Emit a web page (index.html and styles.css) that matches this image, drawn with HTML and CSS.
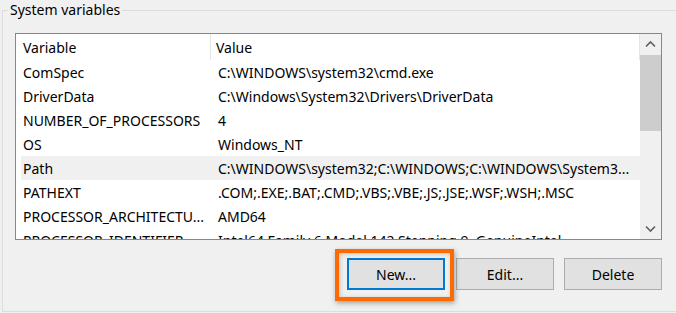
FILE: index.html
```html
<!DOCTYPE html>
<html lang="en">
<head>
<meta charset="utf-8">
<title>System variables</title>
<link rel="stylesheet" href="styles.css">
</head>
<body>
<fieldset class="group">
  <legend class="group-title">System variables</legend>
  <div class="inner">
    <div class="listbox">
      <div class="list">
        <div class="row head">
          <div class="cell">Variable</div>
          <div class="cell sep">Value</div>
        </div>
        <div class="row"><div class="cell">ComSpec</div><div class="cell">C:\WINDOWS\system32\cmd.exe</div></div>
        <div class="row"><div class="cell">DriverData</div><div class="cell">C:\Windows\System32\Drivers\DriverData</div></div>
        <div class="row"><div class="cell">NUMBER_OF_PROCESSORS</div><div class="cell">4</div></div>
        <div class="row"><div class="cell">OS</div><div class="cell">Windows_NT</div></div>
        <div class="row selected"><div class="cell">Path</div><div class="cell">C:\WINDOWS\system32;C:\WINDOWS;C:\WINDOWS\System3...</div></div>
        <div class="row"><div class="cell">PATHEXT</div><div class="cell">.COM;.EXE;.BAT;.CMD;.VBS;.VBE;.JS;.JSE;.WSF;.WSH;.MSC</div></div>
        <div class="row"><div class="cell">PROCESSOR_ARCHITECTU...</div><div class="cell">AMD64</div></div>
        <div class="row"><div class="cell">PROCESSOR_IDENTIFIER</div><div class="cell">Intel64 Family 6 Model 142 Stepping 9, GenuineIntel</div></div>
      </div>
      <div class="scrollbar">
        <div class="sb-btn">
          <svg width="21" height="21" viewBox="0 0 21 21"><polyline points="6,12.5 10.5,8 15,12.5" fill="none" stroke="#606060" stroke-width="1.6"/></svg>
        </div>
        <div class="sb-thumb"></div>
        <div class="sb-track"></div>
        <div class="sb-btn">
          <svg width="21" height="21" viewBox="0 0 21 21"><polyline points="6,8.5 10.5,13 15,8.5" fill="none" stroke="#606060" stroke-width="1.6"/></svg>
        </div>
      </div>
    </div>
    <div class="buttons">
      <span class="callout"><button class="btn default">New...</button></span>
      <button class="btn">Edit...</button>
      <button class="btn">Delete</button>
    </div>
  </div>
</fieldset>
</body>
</html>
```
FILE: styles.css
```css
html, body {
  margin: 0;
  padding: 0;
  background: #f0f0f0;
  overflow: hidden;
}
body {
  width: 676px;
  height: 313px;
  font-family: "Noto Sans", "Open Sans", sans-serif;
  font-size: 14px;
  color: #000;
}
.group {
  margin: 0 0 0 2px;
  width: 674px;
  padding: 0 0 21px 5px;
  border: 1px solid #dcdcdc;
  border-right: none;
  box-sizing: border-box;
  min-width: 0;
}
.group-title {
  padding: 0 2px;
  height: 20px;
  line-height: 20px;
  font-size: 14px;
}
.inner {
  margin-left: 7px;
  width: 647px;
}
.listbox {
  margin-top: 13px;
  height: 207px;
  border: 1px solid #828790;
  box-sizing: border-box;
  background: #fff;
  display: flex;
  overflow: hidden;
}
.list {
  flex: 1;
  padding-left: 5px;
  overflow: hidden;
}
.row {
  display: grid;
  grid-template-columns: 195px 1fr;
  height: 24px;
  align-items: center;
  white-space: nowrap;
}
.row .cell {
  padding-left: 2px;
  overflow: hidden;
}
.row.head {
  height: 26px;
  grid-template-columns: 189px 1fr;
  border-right: 1px solid #e5e5e5;
  align-items: stretch;
}
.row.head .cell {
  display: flex;
  align-items: center;
}
.row.head .sep {
  border-left: 1px solid #e5e5e5;
  padding-left: 5px;
}
.row.selected {
  background: #f0f0f0;
}
.scrollbar {
  width: 21px;
  display: flex;
  flex-direction: column;
  background: #f0f0f0;
}
.sb-btn {
  height: 21px;
  flex: none;
}
.sb-btn svg {
  display: block;
}
.sb-thumb {
  height: 76px;
  background: #cdcdcd;
  flex: none;
}
.sb-track {
  flex: 1;
}
.buttons {
  margin-top: 18px;
  display: flex;
  justify-content: flex-end;
  gap: 10px;
}
.btn {
  width: 98px;
  height: 32px;
  margin: 0;
  background: #e1e1e1;
  border: 1px solid #adadad;
  font-family: inherit;
  font-size: 14px;
  color: #000;
  padding: 0;
  box-sizing: border-box;
}
.btn.default {
  border: 2px solid #0078d7;
  display: block;
}
.callout {
  position: relative;
  display: block;
  margin-right: 1px;
}
.callout::after {
  content: "";
  position: absolute;
  top: -9px;
  right: -9px;
  bottom: -11px;
  left: -12px;
  border: 4px solid #ff6a00;
  box-shadow: 1px 2px 5px rgba(0, 0, 0, 0.35), inset 1px 1px 4px rgba(0, 0, 0, 0.2);
  pointer-events: none;
}
```
